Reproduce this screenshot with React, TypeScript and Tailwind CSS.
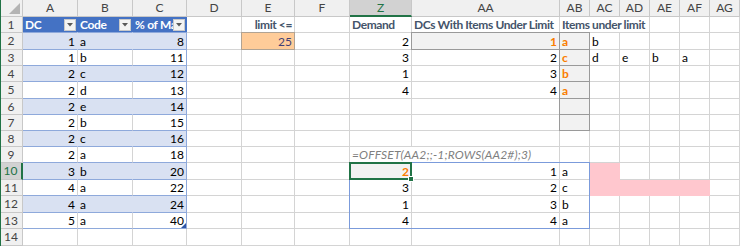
import React from "react";

// Columns visible in the sheet (D..F, then Z onwards after the hidden range)
const COLS = ["A", "B", "C", "D", "E", "F", "Z", "AA", "AB", "AC", "AD", "AE", "AF", "AG"];

const DATA: Record<string, string>[] = [
  { A: "DC", B: "Code", C: "% of Max", E: "limit <=", Z: "Demand", AA: "DCs With Items Under Limit", AB: "Items under limit" },
  { A: "1", B: "a", C: "8", E: "25", Z: "2", AA: "1", AB: "a", AC: "b" },
  { A: "1", B: "b", C: "11", Z: "3", AA: "2", AB: "c", AC: "d", AD: "e", AE: "b", AF: "a" },
  { A: "2", B: "c", C: "12", Z: "1", AA: "3", AB: "b" },
  { A: "2", B: "d", C: "13", Z: "4", AA: "4", AB: "a" },
  { A: "2", B: "e", C: "14" },
  { A: "2", B: "b", C: "15" },
  { A: "2", B: "c", C: "16" },
  { A: "2", B: "a", C: "18", Z: "=OFFSET(AA2;;-1;ROWS(AA2#);3)" },
  { A: "3", B: "b", C: "20", Z: "2", AA: "1", AB: "a" },
  { A: "4", B: "a", C: "22", Z: "3", AA: "2", AB: "c" },
  { A: "4", B: "a", C: "24", Z: "1", AA: "3", AB: "b" },
  { A: "5", B: "a", C: "40", Z: "4", AA: "4", AB: "a" },
  {},
];

// cells that spill over their neighbours
const SPANS: Record<string, number> = { "1:AB": 3, "9:Z": 2 };
const HEAD4 = ["1:E", "1:Z", "1:AA", "1:AB"];
const CALC = ["2:AA", "2:AB", "3:AB", "4:AB", "5:AB", "6:AB", "7:AB", "10:Z"];
const PINK = ["10:AC", "11:AC", "11:AD", "11:AE", "11:AF"];

const GRID =
  "grid grid-cols-[23px_55px_55px_54px_55px_53px_55px_62px_148px_30px_30px_30px_30px_30px_30px] grid-rows-[17px_16px_17px_16px_16px_17px_16px_16px_16px_16px_17px_16px_17px_16px_17px]";

function Dropdown() {
  return (
    <div className="w-[12px] h-[12px] shrink-0 mr-[1px] bg-[#f3f3f3] border border-[#c9c9c9] flex items-center justify-center">
      <svg width="6" height="4" viewBox="0 0 6 4">
        <polygon points="0,0 6,0 3,3.5" fill="#595959" />
      </svg>
    </div>
  );
}

function renderCell(row: number, col: string) {
  const key = `${row}:${col}`;
  const v = DATA[row - 1][col];
  const isNum = v !== undefined && /^-?\d+$/.test(v);
  const inTable = ["A", "B", "C"].includes(col) && row <= 13;
  const span = SPANS[key];

  let cls = "relative flex items-center whitespace-nowrap px-[2px] border-r border-b border-[#d4d4d4] bg-white text-black";
  let text = "";

  if (inTable && row === 1) {
    cls = "relative flex items-center whitespace-nowrap pl-[2px] bg-[#4472c4] border-r border-b border-[#4472c4] text-white font-bold tracking-[-0.3px]";
    return (
      <div key={key} className={cls}>
        <span className="flex-1 overflow-hidden">{v}</span>
        <Dropdown />
      </div>
    );
  }
  if (inTable) {
    const band = row % 2 === 0;
    cls = `relative flex items-center whitespace-nowrap px-[2px] border-b border-[#8ea9db] text-black ${
      band ? "bg-[#d9e1f2] border-r" : "bg-white border-r"
    } ${col === "C" ? "border-r-[#8ea9db]" : band ? "border-r-[#d9e1f2]" : "border-r-[#d4d4d4]"}`;
    if (row === 2) cls += " border-t border-t-[#8ea9db] -mt-px";
  }
  if (HEAD4.includes(key)) text = "font-bold text-[#44546a] tracking-[-0.4px]";
  if (key === "2:E") {
    cls = "relative flex items-center whitespace-nowrap px-[2px] bg-[#ffcc99] border border-[#b1a393] -mt-px -ml-px text-[#3f3f76]";
  }
  if (CALC.includes(key)) {
    cls = "relative flex items-center whitespace-nowrap px-[2px] bg-[#f2f2f2] border border-[#9a9a9a] -mt-px -ml-px";
    text = "font-bold text-[#fa7d00]";
  }
  if (PINK.includes(key)) {
    cls = "relative flex items-center whitespace-nowrap px-[2px] bg-[#ffc7ce] border-r border-b border-[#ffc7ce]";
  }
  if (key === "9:Z") text = "italic text-[#7f7f7f] tracking-[0.15px]";

  const spanCls = span === 3 ? "col-span-3" : span === 2 ? "col-span-2" : "";
  const right = isNum || key === "1:E";

  return (
    <div key={key} className={`${cls} ${spanCls} ${right ? "justify-end" : "justify-start"}`}>
      <span className={`leading-none pt-[1px] ${text}`}>{v}</span>
      {key === "13:C" && (
        <svg className="absolute right-0 bottom-0" width="5" height="5" viewBox="0 0 5 5">
          <polygon points="5,0 5,5 0,5" fill="#2f56a8" />
        </svg>
      )}
    </div>
  );
}

export default function App() {
  const rows = Array.from({ length: 14 }, (_, i) => i + 1);

  return (
    <div className="w-[740px] h-[246px] overflow-hidden bg-white text-[12px] font-['Lato','Liberation_Sans',sans-serif]">
      <div className="relative">
        <div className={GRID}>
          {/* corner */}
          <div className="relative bg-[#f0f0f0] border-r border-b border-[#c8c8c8] flex items-end justify-end pr-[2px] pb-[2px]">
            <svg width="11" height="11" viewBox="0 0 11 11">
              <polygon points="11,0 11,11 0,11" fill="#b4b4b4" />
            </svg>
          </div>
          {/* column letters */}
          {COLS.map((c) =>
            c === "Z" ? (
              <div key={c} className="flex items-center justify-center bg-[#d2d2d2] border-r border-[#c8c8c8] border-b-2 border-b-[#217346] text-[#217346] leading-none">
                {c}
              </div>
            ) : (
              <div key={c} className="flex items-center justify-center bg-[#f0f0f0] border-r border-b border-[#c8c8c8] text-[#444] leading-none">
                {c}
              </div>
            )
          )}
          {rows.map((r) => (
            <React.Fragment key={r}>
              {r === 10 ? (
                <div className="flex items-center justify-center bg-[#d2d2d2] border-b border-[#c8c8c8] border-r-2 border-r-[#217346] text-[#217346] leading-none">
                  {r}
                </div>
              ) : (
                <div className="flex items-center justify-center bg-[#f0f0f0] border-r border-b border-[#c8c8c8] text-[#444] leading-none">
                  {r}
                </div>
              )}
              {COLS.map((c) => {
                // skip cells covered by a spill from the left
                if (r === 1 && (c === "AC" || c === "AD")) return null;
                if (r === 9 && c === "AA") return null;
                return renderCell(r, c);
              })}
            </React.Fragment>
          ))}
        </div>

        {/* selection + spill range layer */}
        <div className={`absolute inset-0 pointer-events-none ${GRID}`}>
          <div className="col-start-1 row-start-1 row-end-16 border-l border-[#217346]" />
          <div className="col-start-8 col-end-11 row-start-11 row-end-15 border border-[#7b9bdb] -mt-px -ml-px" />
          <div className="relative col-start-8 row-start-11 border-2 border-[#217346] -mt-px -ml-px">
            <div className="absolute -right-[4px] -bottom-[4px] w-[6px] h-[6px] bg-[#217346] border border-white" />
          </div>
        </div>
      </div>
    </div>
  );
}
